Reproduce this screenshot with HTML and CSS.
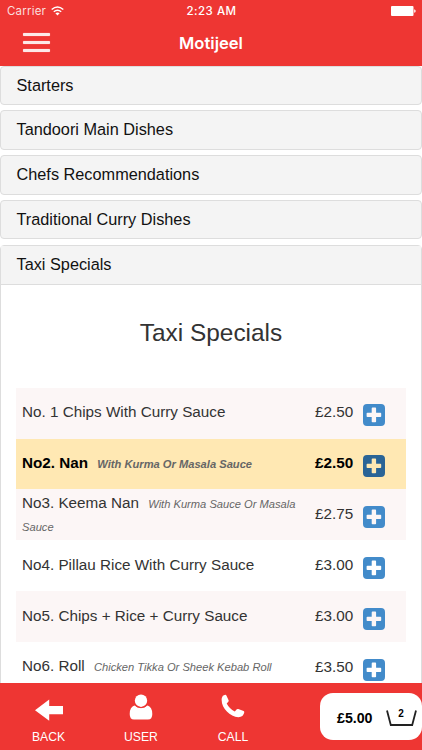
FILE: index.html
```html
<!DOCTYPE html>
<html lang="en">
<head>
<meta charset="utf-8">
<title>Motijeel</title>
<link rel="stylesheet" href="styles.css">
</head>
<body>
<svg class="defs" width="0" height="0">
  <symbol id="plus" viewBox="0 0 22 22">
    <path fill-rule="evenodd" d="M4 0H18Q22 0 22 4V18Q22 22 18 22H4Q0 22 0 18V4Q0 0 4 0ZM9.5 3.6Q8.7 3.6 8.7 4.4V8.7H4.4Q3.6 8.7 3.6 9.5V12.3Q3.6 13.1 4.4 13.1H8.7V17.4Q8.7 18.2 9.5 18.2H12.3Q13.1 18.2 13.1 17.4V13.1H17.4Q18.2 13.1 18.2 12.3V9.5Q18.2 8.7 17.4 8.7H13.1V4.4Q13.1 3.6 12.3 3.6Z"/>
  </symbol>
</svg>
<div class="app">
  <header class="header">
    <div class="status">
      <div class="carrier">Carrier
        <svg width="13" height="10" viewBox="0 0 13 10"><g fill="none" stroke="#fff" stroke-width="1.5"><path d="M.7 3.5Q6.5-1.6 12.3 3.5"/><path d="M2.8 5.8Q6.5 2.6 10.2 5.8"/></g><path fill="#fff" d="M4.4 7.3Q6.5 5.7 8.6 7.3L6.5 9.6Z"/></svg>
      </div>
      <div class="time">2:23 AM</div>
      <svg class="battery" width="25" height="10" viewBox="0 0 25 10"><rect width="22.5" height="10" rx="1" fill="#fff"/><path fill="#fff" d="M23.2 3.2Q24.7 3.6 24.7 5T23.2 6.8Z"/></svg>
    </div>
    <div class="nav">
      <div class="burger"><i></i><i></i><i></i></div>
      <h1>Motijeel</h1>
    </div>
  </header>
  <main class="menu">
    <div class="panel">Starters</div>
    <div class="panel">Tandoori Main Dishes</div>
    <div class="panel">Chefs Recommendations</div>
    <div class="panel">Traditional Curry Dishes</div>
    <section class="open">
      <div class="open-title">Taxi Specials</div>
      <h2>Taxi Specials</h2>
      <div class="items">
        <div class="item"><div class="name">No. 1 Chips With Curry Sauce</div><div class="price">£2.50</div><svg class="add"><use href="#plus"/></svg></div>
        <div class="item selected"><div class="name">No2. Nan <em>With Kurma Or Masala Sauce</em></div><div class="price">£2.50</div><svg class="add"><use href="#plus"/></svg></div>
        <div class="item two-line"><div class="name">No3. Keema Nan <em>With Kurma Sauce Or Masala<br>Sauce</em></div><div class="price">£2.75</div><svg class="add"><use href="#plus"/></svg></div>
        <div class="item"><div class="name">No4. Pillau Rice With Curry Sauce</div><div class="price">£3.00</div><svg class="add"><use href="#plus"/></svg></div>
        <div class="item"><div class="name">No5. Chips + Rice + Curry Sauce</div><div class="price">£3.00</div><svg class="add"><use href="#plus"/></svg></div>
        <div class="item"><div class="name">No6. Roll <em>Chicken Tikka Or Sheek Kebab Roll</em></div><div class="price">£3.50</div><svg class="add"><use href="#plus"/></svg></div>
      </div>
    </section>
  </main>
  <footer class="footer">
    <div class="tab"><svg width="30" height="28" viewBox="0 0 30 28"><path fill="#fff" d="M1 17.3L15.2 6.5V13H29V21.3H15.2V27.7Z"/></svg><span>BACK</span></div>
    <div class="tab"><svg width="24" height="28" viewBox="0 0 24 28"><g fill="#fff"><circle cx="12" cy="7.7" r="6.2"/><path d="M5.8 12.3Q8.3 14.9 12 14.9T18.2 12.3Q23.3 14 23.3 21Q23.3 26.5 19 26.5H5Q.7 26.5 .7 21Q.7 14 5.8 12.3Z"/></g><path d="M5.2 11.7Q8 14.7 12 14.7T18.8 11.7" fill="none" stroke="#ee3633" stroke-width="1"/></svg><span>USER</span></div>
    <div class="tab"><svg width="24" height="28" viewBox="0 0 24 28"><path fill="#fff" d="M.8 4.9Q1.2 2.4 4.2 1.8Q5 1.7 5.4 2.4L7.6 7.2Q7.9 8 7.3 8.7L5.7 10.6Q8.3 15.8 13.8 18.5L15.8 16.3Q16.5 15.7 17.3 16L22.6 18.1Q23.4 18.5 23.3 19.3Q22.4 24.2 17.4 24.2C8.5 23.3-.7 14 .8 4.9Z"/></svg><span>CALL</span></div>
    <div class="basket"><b>£5.00</b><div class="cart"><svg width="31" height="18" viewBox="0 0 31 18"><path d="M1 1.5L4.8 16H26.2L30 1.5" fill="none" stroke="#222" stroke-width="1.8"/></svg><span>2</span></div></div>
  </footer>
</div>
</body>
</html>
```
FILE: styles.css
```css
* { box-sizing: border-box; }
body { margin: 0; font-family: "Liberation Sans", Arial, sans-serif; background: #fff; }
.defs { display: block; }
.app { height: 750px; width: 422px; display: flex; flex-direction: column; overflow: hidden; }
.header { height: 65.5px; flex: none; background: #ee3633; color: #fff; font-family: Inter, sans-serif; }
.status { height: 22px; padding: 0 6px 0 7px; display: grid; grid-template-columns: 1fr auto 1fr; align-items: center; font-size: 11.5px; }
.carrier { display: flex; align-items: center; gap: 5px; letter-spacing: .2px; color: #fbdedd; }
.time { font-weight: 500; letter-spacing: .5px; }
.battery { justify-self: end; }
.nav { height: 43px; display: grid; grid-template-columns: 1fr auto 1fr; align-items: center; padding: 0 23px; }
.burger { width: 27px; display: grid; gap: 5px; margin-top: -2px; }
.burger i { height: 3px; background: #fde9e8; border-radius: 1px; box-shadow: 0 0 1px #fff9; }
h1 { margin: -2px 0 0; font-size: 16.6px; font-weight: 600; line-height: 20px; }
.menu { flex: 1; min-height: 0; overflow: hidden; display: flex; flex-direction: column; gap: 5.3px; font-size: 16.3px; color: #111; }
.panel { height: 39.5px; flex: none; padding: 0 15.5px; line-height: 37.6px; background: #f4f4f4; border: 1px solid #ddd; border-radius: 4px; }
.open { flex: none; border: 1px solid #ddd; border-radius: 4px 4px 0 0; padding: 0; }
.open-title { height: 39px; padding: 0 15.5px; line-height: 37.6px; background: #f4f4f4; border-bottom: 1px solid #ddd; }
h2 { margin: 0; height: 103px; padding-top: 33px; font-size: 24.4px; line-height: 30px; font-weight: 400; text-align: center; color: #333; }
.items { margin: 0 15px; }
.item { height: 50.9px; display: grid; grid-template-columns: 292px 48px 22px; align-items: center; padding-left: 6px; font-size: 15.25px; color: #333; }
.item:nth-child(odd) { background: #fcf6f6; }
.name { white-space: nowrap; line-height: 22px; padding-bottom: 2px; }
.two-line .name { padding-bottom: 0; }
.price { padding: 0 0 3px 1px; }
.add { width: 22px; height: 22px; margin-top: 4px; margin-left: 1px; fill: #428bca; }
em { margin-left: 5px; font-size: 11.15px; color: #666; }
.item.selected { background: #ffe8b3; color: #000; font-weight: 700; }
.selected .add { fill: #2a6496; }
.footer { height: 67px; flex: none; background: #ee3633; color: #fff; display: grid; grid-template-columns: 97px 88px 96px 39px 102px; align-items: start; }
.tab { padding-top: 10px; display: flex; flex-direction: column; align-items: center; font-size: 12.2px; line-height: 14px; }
.tab svg { display: block; margin-bottom: 9px; }
.basket { grid-column: 5; margin-top: 10px; height: 46.5px; background: #fff; color: #000; border-radius: 13px; display: flex; align-items: center; padding: 3px 0 0 17px; font-size: 14.2px; }
.cart { display: grid; place-items: center; width: 31px; margin-left: 13px; }
.cart > * { grid-area: 1 / 1; }
.cart span { font-size: 10px; font-weight: 700; margin-bottom: 8px; }
```
